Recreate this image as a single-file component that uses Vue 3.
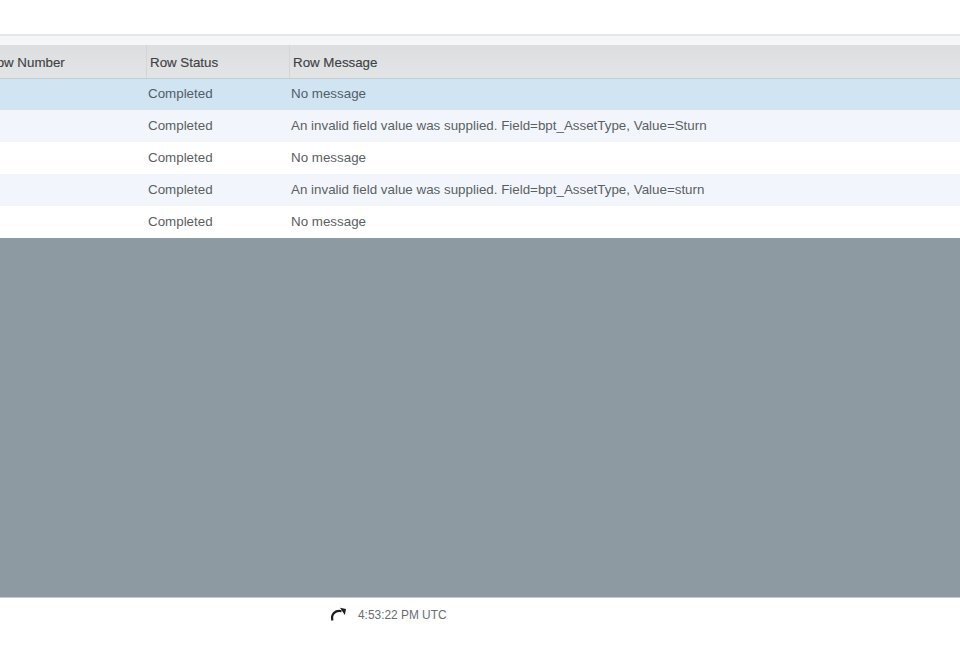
<script setup>
const rows = [
  { msg: 'No message', cls: 'selected' },
  { msg: 'An invalid field value was supplied. Field=bpt_AssetType, Value=Sturn', cls: 'alt' },
  { msg: 'No message', cls: '' },
  { msg: 'An invalid field value was supplied. Field=bpt_AssetType, Value=sturn', cls: 'alt' },
  { msg: 'No message', cls: '' },
]
</script>

<template>
  <div class="page">
    <div class="top"></div>
    <div class="rule"></div>
    <div class="table">
      <div class="row head">
        <div class="cell first">Row Number</div>
        <div class="cell second">Row Status</div>
        <div class="cell third">Row Message</div>
      </div>
      <div v-for="(r, i) in rows" :key="i" class="row body" :class="r.cls">
        <div class="cell first"></div>
        <div class="cell second">Completed</div>
        <div class="cell third">{{ r.msg }}</div>
      </div>
    </div>
    <div class="backdrop"></div>
    <div class="footer">
      <svg class="refresh" width="16" height="14" viewBox="0 0 16 14" fill="none">
        <path d="M2.4 13.5 C0.8 7 5.5 2.8 11.5 4.2" stroke="#1d1d1d" stroke-width="2.2" fill="none" />
        <path d="M10 0.8 L16 2 L14.8 8 Z" fill="#1d1d1d" />
      </svg>
      <span class="time">4:53:22 PM UTC</span>
    </div>
  </div>
</template>

<style>
html, body { margin: 0; background: #fff; }
</style>

<style scoped>
.page {
  width: 960px;
  height: 672px;
  overflow: hidden;
  display: flex;
  flex-direction: column;
  background: #fff;
  font-family: "Liberation Sans", Arial, sans-serif;
}
.top { height: 34px; background: #fff; flex: none; }
.rule {
  height: 11px;
  flex: none;
  box-sizing: border-box;
  background: #f5f6f7;
  border-top: 2px solid #e4e6e8;
}
.table { flex: none; }
.row { display: grid; grid-template-columns: 147px 143px 1fr; }
.head {
  height: 33px;
  background: linear-gradient(#dcdee0, #e3e4e6);
  border-bottom: 1px solid #c6ccd1;
  color: #3f4245;
  font-size: 13.33px;
  -webkit-text-stroke: 0.15px #3f4245;
}
.head .cell {
  line-height: 35px;
  border-right: 1px solid #d3d5d8;
}
.head .first { text-indent: -13px; }
.head .second { padding-left: 3px; }
.head .third { padding-left: 3px; border-right: 0; }
.body {
  height: 32px;
  color: #5b5f63;
  font-size: 13.37px;
  line-height: 31px;
  background: #fff;
}
.body .second { padding-left: 1px; }
.body .third { padding-left: 1px; }
.selected { background: #d1e4f2; color: #515d69; height: 31px; line-height: 30px; }
.alt { background: #f2f6fc; }
.backdrop { flex: none; height: 360px; background: #8e9aa1; border-bottom: 1px solid #c4cacd; box-sizing: border-box; }
.footer {
  flex: 1;
  display: flex;
  align-items: flex-start;
  padding: 9px 0 0 330px;
  background: #fff;
}
.refresh { flex: none; }
.time { margin-left: 12px; font-size: 11.9px; line-height: 16px; color: #6a6e72; }
</style>
